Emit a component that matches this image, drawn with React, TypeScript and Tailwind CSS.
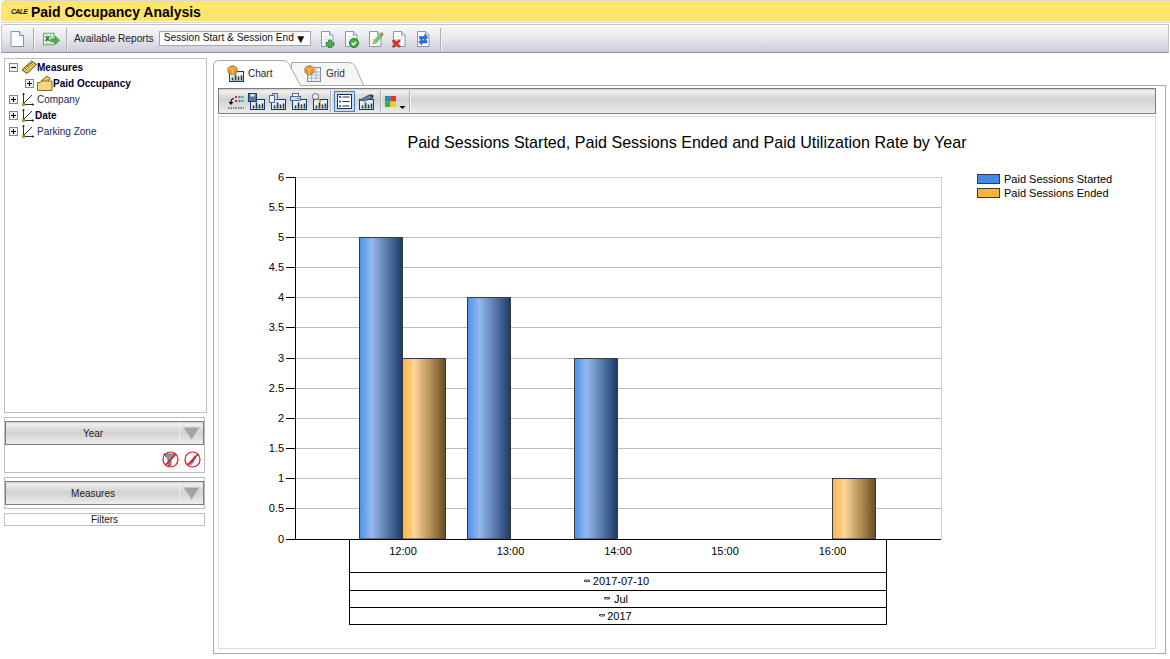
import type { JSX, ReactNode } from "react";

const FONT = "font-['Liberation_Sans',Arial,sans-serif]";

/* ---------- small icons ---------- */

function Sheet({ children }: { children?: ReactNode }): JSX.Element {
  return (
    <svg width="18" height="18" viewBox="0 0 18 18" className="shrink-0">
      <path d="M3.500 1.500h8l3.500 3.500v11.500h-11.500z" fill="#fdfeff" stroke="#7f99b5" />
      <path d="M11.500 1.500v3.500h3.500" fill="#dfe8f2" stroke="#7f99b5" />
      <path d="M5.500 7h7M5.500 9.500h7M5.500 12h5" stroke="#d5deea" />
      {children}
    </svg>
  );
}

function NewDocIcon(): JSX.Element {
  return (
    <svg width="14" height="16" viewBox="0 0 14 16" className="shrink-0">
      <path d="M1 .5h8.500l4 4v11H1z" fill="#fbfdff" stroke="#7f99b5" />
      <path d="M9.500 .5v4h4" fill="#e3ebf4" stroke="#7f99b5" />
    </svg>
  );
}

function ExportIcon(): JSX.Element {
  return (
    <svg width="18" height="16" viewBox="0 0 20 18" className="shrink-0">
      <rect x="1.500" y="2.500" width="12" height="13" fill="#eaf4e6" stroke="#5d9a57" />
      <path d="M1.500 6.500h12M1.500 10.500h12M5.500 2.500v13M9.500 2.500v13" stroke="#9bc596" />
      <path d="M4 6l4 5M8 6l-4 5" stroke="#1f7a35" strokeWidth="1.600" />
      <path d="M10 9h5V6l4.500 4.500L15 15v-3h-5z" fill="#55b848" stroke="#2c8431" strokeWidth="0.800" />
    </svg>
  );
}

function AddReportIcon(): JSX.Element {
  return (
    <Sheet>
      <path d="M10.500 10h3v2.500H16v3h-2.500V18h-3v-2.500H8v-3h2.500z" fill="#46b23e" stroke="#1f7a2a" strokeWidth="0.700" />
    </Sheet>
  );
}

function SaveReportIcon(): JSX.Element {
  return (
    <Sheet>
      <circle cx="12" cy="13" r="4.500" fill="#46b23e" stroke="#1f7a2a" />
      <path d="M9.800 13l1.700 1.800 2.800-3" stroke="#fff" strokeWidth="1.400" fill="none" />
    </Sheet>
  );
}

function EditReportIcon(): JSX.Element {
  return (
    <Sheet>
      <path d="M7 14l1-3 7-8 2 2-7 8z" fill="#7ccf5a" stroke="#3c8a33" strokeWidth="0.700" />
      <path d="M14.500 3.500l1-1.500 2 2-1 1.500z" fill="#e0574a" />
      <path d="M7 14l1-3 2 2z" fill="#f1c15a" />
    </Sheet>
  );
}

function DeleteReportIcon(): JSX.Element {
  return (
    <Sheet>
      <path d="M2 11l2-1.500 2.500 2 2.500-2 1.500 1.500-2.500 2.500 2.500 2.500-1.500 1.500-2.500-2.500-2.500 2.500L2 16.500 4.500 14z" fill="#e0301e" stroke="#a51b10" strokeWidth="0.500" />
    </Sheet>
  );
}

function RefreshReportIcon(): JSX.Element {
  return (
    <Sheet>
      <path d="M5.500 9V6.500h5V4.500l3.500 3-3.500 3V9z" fill="#2a73d8" stroke="#174c9e" strokeWidth="0.500" />
      <path d="M13 10.500V13H8v2l-3.500-3L8 9v1.500z" fill="#2a73d8" stroke="#174c9e" strokeWidth="0.500" />
    </Sheet>
  );
}

function MeasuresIcon(): JSX.Element {
  return (
    <svg width="16" height="14" viewBox="0 0 16 14" className="shrink-0">
      <path d="M1 10L10.500 1l5 3.500L6 13.500z" fill="#e9c35a" stroke="#5b4a16" />
      <path d="M4 8l1.500 1.500M6 6l1.500 1.500M8 4.500l1.500 1.500M10 3l1.500 1.500" stroke="#4b3c10" />
    </svg>
  );
}

function FolderMeasureIcon(): JSX.Element {
  return (
    <svg width="16" height="16" viewBox="0 0 16 16" className="shrink-0">
      <path d="M4 6l6-5 3.500 2.500L9 8z" fill="#e9c35a" stroke="#5b4a16" strokeWidth="0.800" />
      <path d="M0.500 7.500h3l1-1.500h10.500v9.500H0.500z" fill="#f5d77f" stroke="#8a6d22" />
    </svg>
  );
}

function DimensionIcon(): JSX.Element {
  return (
    <svg width="14" height="14" viewBox="0 0 14 14" className="shrink-0">
      <path d="M2.500 1v11.500H13M2.500 11.500L11 3" stroke="#33302a" fill="none" />
      <path d="M1.500 3l1-2 1 2M11 11.500l2 1-2 1" fill="none" stroke="#33302a" strokeWidth="0.700" />
      <rect x="1" y="11" width="3" height="3" fill="#a4a02e" />
    </svg>
  );
}

function TreeBox({ open }: { open?: boolean }): JSX.Element {
  return (
    <svg width="9" height="9" viewBox="0 0 9 9" className="shrink-0">
      <rect x="0.500" y="0.500" width="8" height="8" fill="#f1f1ee" stroke="#7e8b9a" />
      <path d="M2 4.500h5" stroke="#000" />
      {!open && <path d="M4.500 2v5" stroke="#000" />}
    </svg>
  );
}

function ChartBase({ children }: { children?: ReactNode }): JSX.Element {
  return (
    <svg width="17" height="17" viewBox="0 0 17 17" className="shrink-0">
      <rect x="2.500" y="6.500" width="14" height="10" fill="#e6eef6" stroke="#173a66" />
      <path d="M5.500 15.500v-3M8.500 15.500v-6M11.500 15.500v-4M14.500 15.500v-5" stroke="#173a66" strokeWidth="1.600" />
      <path d="M6.800 15.500v-2M9.800 15.500v-4M12.800 15.500v-3" stroke="#e5a823" strokeWidth="1" />
      {children}
    </svg>
  );
}

function CubeBadge(): JSX.Element {
  return (
    <>
      <path d="M5.500 0.500l4.500 2v5l-4.500 2.500L1 7.500v-5z" fill="#e99a2e" stroke="#8e5a14" strokeWidth="0.700" />
      <path d="M1 2.500l4.500 2 4.500-2M5.500 4.500V10" stroke="#ffd48a" strokeWidth="0.700" fill="none" />
    </>
  );
}

function GridTabIcon(): JSX.Element {
  return (
    <svg width="17" height="17" viewBox="0 0 17 17" className="shrink-0">
      <rect x="3.500" y="2.500" width="13" height="14" fill="#eef2f7" stroke="#7d8da0" />
      <path d="M3.500 7h13M3.500 10h13M3.500 13h13M7.500 2.500v14M12 2.500v14" stroke="#aab6c4" />
      <CubeBadge />
    </svg>
  );
}

function ChartTypeIcon(): JSX.Element {
  return (
    <svg width="17" height="17" viewBox="0 0 17 17" className="shrink-0">
      <path d="M7 5.500C4.500 5.500 4 7.500 4 10" stroke="#111" strokeWidth="1.200" fill="none" />
      <path d="M1.500 9h5L4 12z" fill="#111" />
      <path d="M8 3h2v2H8zM8 7h2v2H8z" fill="#d2342c" />
      <path d="M11.500 3h2v2h-2zM11.500 7h2v2h-2z" fill="#2f80d8" />
      <path d="M14.500 3h2v2h-2zM14.500 7h2v2h-2z" fill="#4bb04a" />
      <path d="M1 15h16" stroke="#222" strokeDasharray="1.500 1" />
    </svg>
  );
}

function ChartToolIcons(): JSX.Element {
  return (
    <>
      <ChartTypeIcon />
      <ChartBase>
        <rect x="0.500" y="0.500" width="8" height="8" fill="#5e7894" stroke="#173a66" />
        <rect x="2.500" y="1" width="4" height="2.500" fill="#dfe8f2" />
      </ChartBase>
      <ChartBase>
        <rect x="3.500" y="0.500" width="5" height="6" fill="#cfdcea" stroke="#4c6c90" />
        <rect x="0.500" y="2.500" width="5" height="7" fill="#eef3f8" stroke="#4c6c90" />
      </ChartBase>
      <ChartBase>
        <rect x="2.500" y="0.500" width="6" height="3" fill="#fff" stroke="#4c6c90" />
        <rect x="0.500" y="3.500" width="10" height="4" fill="#cfdcea" stroke="#4c6c90" />
        <path d="M7 5.500h2" stroke="#d2342c" />
      </ChartBase>
      <ChartBase>
        <circle cx="4.500" cy="3.500" r="3" fill="#eef3f8" stroke="#4c6c90" />
        <path d="M6.500 5.500l3.500 3" stroke="#d79a1e" strokeWidth="1.800" />
      </ChartBase>
    </>
  );
}

function LegendToggleIcon(): JSX.Element {
  return (
    <svg width="21" height="21" viewBox="0 0 21 21" className="shrink-0">
      <rect x="0.500" y="0.500" width="20" height="20" fill="#c6dcf2" stroke="#4b7fb8" />
      <rect x="3.500" y="3.500" width="14" height="14" fill="#fff" stroke="#21304a" />
      <path d="M5 6h2" stroke="#a02ab0" strokeWidth="2" />
      <path d="M5 10.500h2" stroke="#2a73d8" strokeWidth="2" />
      <path d="M5 15h2" stroke="#3a9a3a" strokeWidth="2" />
      <path d="M8.500 6h7M8.500 10.500h7M8.500 15h7" stroke="#21304a" />
    </svg>
  );
}

function DataTableIcon(): JSX.Element {
  return (
    <ChartBase>
      <path d="M3 7l9-5h4v3L7 8z" fill="#6d7f95" stroke="#173a66" strokeWidth="0.700" />
      <path d="M12 2h4v3" fill="#1c3c6a" />
    </ChartBase>
  );
}

function PaletteIcon(): JSX.Element {
  return (
    <svg width="22" height="17" viewBox="0 0 22 17" className="shrink-0">
      <rect x="1" y="3" width="5.500" height="5.500" fill="#1b8fb3" />
      <rect x="6.500" y="3" width="5.500" height="5.500" fill="#e2362c" />
      <rect x="1" y="8.500" width="5.500" height="5.500" fill="#3fae3e" />
      <rect x="6.500" y="8.500" width="5.500" height="5.500" fill="#f2d11f" />
      <path d="M15.500 13h6l-3 3z" fill="#000" />
    </svg>
  );
}

function NoFilterIcon(): JSX.Element {
  return (
    <svg width="17" height="17" viewBox="0 0 17 17" className="shrink-0">
      <path d="M1.500 3h12l-4.500 5v6.500h-3V8z" fill="#8f979c" stroke="#434a50" strokeWidth="0.700" />
      <circle cx="8.500" cy="8.500" r="7.500" fill="none" stroke="#e8141c" strokeWidth="1.200" />
      <path d="M3.500 14L14 3" stroke="#e8141c" strokeWidth="1.600" />
    </svg>
  );
}

function NoSortIcon(): JSX.Element {
  return (
    <svg width="17" height="17" viewBox="0 0 17 17" className="shrink-0">
      <path d="M5 13l2.500-3 3-5.500 2 1.500-3 5.500L6.500 14.500z" fill="#4d88bd" />
      <circle cx="8.500" cy="8.500" r="7.500" fill="none" stroke="#e8141c" strokeWidth="1.200" />
      <path d="M3.500 14L14 3" stroke="#e8141c" strokeWidth="1.600" />
    </svg>
  );
}

function TriangleDown(): JSX.Element {
  return (
    <svg width="17" height="13" viewBox="0 0 17 13">
      <path d="M.5 .5h16l-8 12z" fill="#a3a3a3" stroke="#c4c4c4" />
    </svg>
  );
}

/* ---------- chart ---------- */

const PLOT = { left: 295, right: 941, top: 177, bottom: 539, maxValue: 6 };
const OFFSET = { x: 219, y: 117 };

function valueToY(value: number): number {
  return PLOT.bottom - (value / PLOT.maxValue) * (PLOT.bottom - PLOT.top);
}

const TICKS = ["0", "0.5", "1", "1.5", "2", "2.5", "3", "3.5", "4", "4.5", "5", "5.5", "6"];
const BARS = [
  { x: 359.5, value: 5, fill: "url(#blueBar)" },
  { x: 402.5, value: 3, fill: "url(#orangeBar)" },
  { x: 467.5, value: 4, fill: "url(#blueBar)" },
  { x: 574.5, value: 3, fill: "url(#blueBar)" },
  { x: 832.5, value: 1, fill: "url(#orangeBar)" },
];
const HOURS = [
  { label: "12:00", x: 403 },
  { label: "13:00", x: 510.5 },
  { label: "14:00", x: 618 },
  { label: "15:00", x: 725 },
  { label: "16:00", x: 832.5 },
];
const LEVELS = [
  { label: "2017-07-10", x: 621, y: 585, dash: 584.5 },
  { label: "Jul", x: 621, y: 602.5, dash: 604.5 },
  { label: "2017", x: 619.5, y: 619.5, dash: 599.5 },
];

function Chart(): JSX.Element {
  return (
    <svg
      width="936"
      height="531"
      viewBox={`${OFFSET.x} ${OFFSET.y} 936 531`}
      className="block"
      fontFamily="'Liberation Sans', Arial, sans-serif"
      fontSize="11"
      fill="#000"
    >
      <defs>
        <linearGradient id="blueBar" x1="0" x2="1" y1="0" y2="0">
          <stop offset="0" stopColor="#4d90ee" />
          <stop offset="0.28" stopColor="#94b9ee" />
          <stop offset="1" stopColor="#1d3a66" />
        </linearGradient>
        <linearGradient id="orangeBar" x1="0" x2="1" y1="0" y2="0">
          <stop offset="0" stopColor="#fdb548" />
          <stop offset="0.28" stopColor="#fdd595" />
          <stop offset="1" stopColor="#6a4d20" />
        </linearGradient>
      </defs>

      <text x="687" y="148" fontSize="16.100" textAnchor="middle">
        Paid Sessions Started, Paid Sessions Ended and Paid Utilization Rate by Year
      </text>

      <path d="M941.500 177v362" stroke="#d0d0d0" />
      {TICKS.map((tick, index) => {
        const y = Math.floor(valueToY(index * 0.5)) + 0.5;
        return (
          <g key={tick}>
            {index > 0 && (
              <path d={`M295 ${y}H941`} stroke={index === 12 ? "#d2d2d2" : "#bdbdbd"} />
            )}
            <path d={`M286 ${y}H295`} stroke="#000" />
            <text x="284" y={y + 3.5} textAnchor="end">
              {tick}
            </text>
          </g>
        );
      })}

      {BARS.map((bar) => {
        const y = Math.floor(valueToY(bar.value)) + 0.5;
        return (
          <rect
            key={bar.x}
            x={bar.x}
            y={y}
            width="43"
            height={539 - y}
            fill={bar.fill}
            stroke="#333a42"
          />
        );
      })}

      <path d="M295.500 177v362M286 539.500H941" stroke="#000" />

      <path
        d="M349.500 539v85.500M886.500 539v85.500M349 572.500h538M349 590.500h538M349 607.500h538M349 624.500h538"
        stroke="#000"
        fill="none"
      />
      {HOURS.map((hour) => (
        <text key={hour.label} x={hour.x} y="555" textAnchor="middle">
          {hour.label}
        </text>
      ))}
      {LEVELS.map((level) => (
        <g key={level.label}>
          <text x={level.x} y={level.y} textAnchor="middle">
            {level.label}
          </text>
          <path
            d={`M${level.dash} ${level.y - 5}h5v1.500h-5z`}
            fill="#fff"
            stroke="#000"
            strokeWidth="0.700"
          />
        </g>
      ))}

      <rect x="977.500" y="174.500" width="22" height="9" fill="#4189ea" stroke="#333a42" />
      <text x="1004" y="183">
        Paid Sessions Started
      </text>
      <rect x="977.500" y="188.500" width="22" height="9" fill="#fdb23e" stroke="#333a42" />
      <text x="1004" y="197">
        Paid Sessions Ended
      </text>
    </svg>
  );
}

/* ---------- panels ---------- */

function DropHeader({ label }: { label: string }): JSX.Element {
  return (
    <div className="flex h-[24px] items-stretch border border-[#7b7b7b] bg-[linear-gradient(#d8d8d8_0,#d8d8d8_1px,#f0f0f0_2px,#e2e2e2_5px,#d2d2d2_11px,#ececec_100%)]">
      <div className="flex flex-1 items-center justify-center pl-[1px] text-[10px] text-[#222]">{label}</div>
      <div className="flex w-[24px] items-center justify-center border-l border-[#eeeeee]">
        <TriangleDown />
      </div>
    </div>
  );
}

function TreeRow({
  label,
  bold,
  icon,
  open,
  indent,
}: {
  label: string;
  bold?: boolean;
  icon: ReactNode;
  open?: boolean;
  indent?: boolean;
}): JSX.Element {
  return (
    <div className={`flex h-[16px] items-center ${indent ? "pl-[20px]" : "pl-[4px]"}`}>
      <TreeBox open={open} />
      <span className="ml-[3px] flex items-center">{icon}</span>
      <span className={bold ? "text-[10px] font-bold text-[#000030]" : "ml-[2px] text-[10px] text-[#262650]"}>
        {label}
      </span>
    </div>
  );
}

function Sidebar(): JSX.Element {
  return (
    <aside className="flex w-[203px] shrink-0 flex-col">
      <div className="mt-[5px] h-[355px] border border-[#bdbdbd] bg-white">
        <TreeRow label="Measures" bold open icon={<MeasuresIcon />} />
        <TreeRow label="Paid Occupancy" bold indent icon={<FolderMeasureIcon />} />
        <TreeRow label="Company" icon={<DimensionIcon />} />
        <TreeRow label="Date" bold icon={<DimensionIcon />} />
        <TreeRow label="Parking Zone" icon={<DimensionIcon />} />
      </div>
      <div className="mt-[4px] h-[56px] w-[201px] border border-[#bdbdbd] bg-white pt-[3px]">
        <DropHeader label="Year" />
        <div className="mt-[6px] flex justify-end gap-[5px] pr-[3px]">
          <NoFilterIcon />
          <NoSortIcon />
        </div>
      </div>
      <div className="mt-[4px] h-[32px] w-[201px] border border-[#bdbdbd] bg-white pt-[3px]">
        <DropHeader label="Measures" />
      </div>
      <div className="mt-[4px] flex h-[13px] w-[201px] items-center justify-center border border-[#bdbdbd] bg-white text-[10px] text-[#222]">
        Filters
      </div>
    </aside>
  );
}

function Tabs(): JSX.Element {
  return (
    <div className="flex h-[26px] items-start">
      <div className="relative z-10 flex h-[27px] w-[88px] shrink-0 items-center gap-[4px] pl-[14px] pt-[1px]">
        <svg width="88" height="27" viewBox="0 0 88 27" className="absolute left-0 top-0 -z-10">
          <path d="M.5 27V7Q.5 1.500 6 1.500H70Q74 1.500 76 5L87.500 26.500V27" fill="#fff" stroke="#a8a8a8" />
        </svg>
        <ChartBase>
          <CubeBadge />
        </ChartBase>
        <span className="text-[10px] text-[#222]">Chart</span>
      </div>
      <div className="relative -ml-[10px] mt-[2px] flex h-[24px] w-[73px] shrink-0 items-center gap-[5px] pl-[13px]">
        <svg width="73" height="24" viewBox="0 0 73 24" className="absolute left-0 top-0 -z-10">
          <path d="M.5 24V1.500H58Q62 1.500 64 5L72.500 24" fill="#f6f6f6" stroke="#a8a8a8" />
        </svg>
        <GridTabIcon />
        <span className="text-[10px] text-[#333]">Grid</span>
      </div>
    </div>
  );
}

function Divider(): JSX.Element {
  return <span className="block h-[22px] w-[2px] shrink-0 border-l border-[#a9abb7] bg-[#f4f4f8]" />;
}

export default function App(): JSX.Element {
  return (
    <div className={`${FONT} isolate flex h-[659px] w-[1170px] flex-col overflow-hidden bg-white pl-[1px] text-black`}>
      <header className="flex h-[23px] shrink-0 items-center rounded-tl-[5px] border-y border-[#d8d8d8] bg-[#ffe46d] pl-[10px] [box-shadow:inset_0_-1px_0_#fff6c8]">
        <span className="w-[20px] text-[7px] font-bold italic leading-none tracking-[-0.7px] text-[#222]">CALE</span>
        <h1 className="text-[14px] font-bold leading-none">Paid Occupancy Analysis</h1>
      </header>

      <div className="mt-[1px] mr-[1px] flex h-[29px] shrink-0 items-center rounded-tl-[3px] border border-[#c3c3c9] border-b-[#8e8e98] bg-[linear-gradient(#fbfbfd,#e6e6ec_50%,#cbccd8)] pl-[8px]">
        <NewDocIcon />
        <span className="ml-[9px]"><Divider /></span>
        <span className="ml-[7px]"><ExportIcon /></span>
        <span className="ml-[6px]"><Divider /></span>
        <span className="ml-[6px] whitespace-nowrap text-[10.200px] text-[#222]">Available Reports</span>
        <div className="ml-[5px] flex h-[15px] w-[152px] shrink-0 items-center justify-between border border-[#a7a7ad] bg-white pl-[4px] pr-[3px] text-[10.200px] leading-none text-[#111]">
          <span className="whitespace-nowrap">Session Start &amp; Session End</span>
          <span className="text-[12px]">▼</span>
        </div>
        <div className="ml-[7px] flex items-center gap-[6px]">
          <AddReportIcon />
          <SaveReportIcon />
          <EditReportIcon />
          <DeleteReportIcon />
          <RefreshReportIcon />
        </div>
        <span className="ml-[8px]"><Divider /></span>
      </div>

      <main className="flex min-h-0 flex-1 pl-[3px]">
        <Sidebar />
        <section className="ml-[6px] flex w-[953px] min-w-0 flex-col pt-[6px]">
          <Tabs />
          <div className="flex h-[569px] flex-col border border-[#a8a8a8] bg-white px-[4px] pt-[2px]">
            <div className="flex h-[26px] w-[938px] shrink-0 items-center gap-[4px] border border-[#7b7b7b] bg-[linear-gradient(#d8d8d8_0,#d8d8d8_1px,#f2f2f2_2px,#e0e0e0_6px,#d2d2d2_11px,#ececec_100%)] pl-[8px]">
              <ChartToolIcons />
              <span className="-mx-[2px]"><Divider /></span>
              <LegendToggleIcon />
              <span className="-ml-[2px]"><DataTableIcon /></span>
              <span className="-mr-[2px] ml-[2px]"><Divider /></span>
              <PaletteIcon />
              <span className="-ml-[1px]"><Divider /></span>
            </div>
            <div className="mt-[2px] h-[533px] w-[938px] border border-[#dcdcdc]">
              <Chart />
            </div>
          </div>
        </section>
      </main>
    </div>
  );
}
